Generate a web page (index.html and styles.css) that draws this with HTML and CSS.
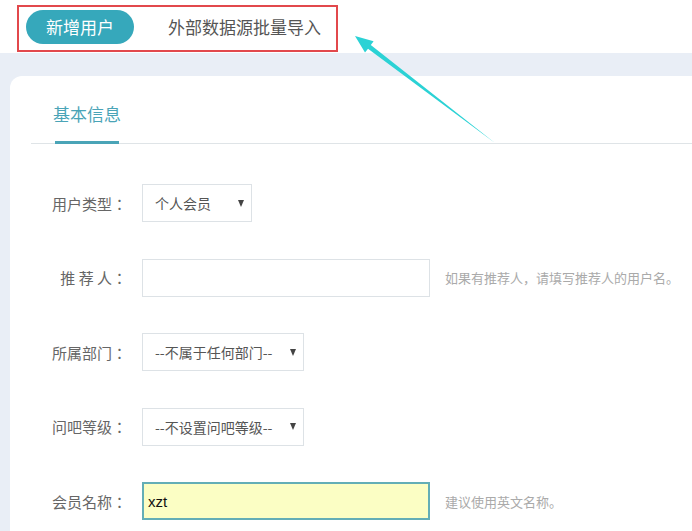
FILE: index.html
```html
<!DOCTYPE html>
<html lang="zh-CN">
<head>
<meta charset="utf-8">
<title>新增用户</title>
<link rel="stylesheet" href="styles.css">
</head>
<body>
<div class="page">
  <header class="header">
    <div class="tabs-box">
      <span class="pill">新增用户</span>
      <span class="plain-tab">外部数据源批量导入</span>
    </div>
  </header>
  <main class="main">
    <section class="card">
      <div class="tabbar">
        <span class="tab active">基本信息</span>
      </div>
      <div class="form">
        <div class="row">
          <span class="label" lang="zh-TW">用户类型：</span>
          <div class="select w-sm"><span class="val">个人会员</span><span class="caret"></span></div>
        </div>
        <div class="row">
          <span class="label" lang="zh-TW">推 荐 人：</span>
          <div class="input"></div>
          <span class="hint">如果有推荐人，请填写推荐人的用户名。</span>
        </div>
        <div class="row">
          <span class="label" lang="zh-TW">所属部门：</span>
          <div class="select w-md"><span class="val">--不属于任何部门--</span><span class="caret"></span></div>
        </div>
        <div class="row">
          <span class="label" lang="zh-TW">问吧等级：</span>
          <div class="select w-md"><span class="val">--不设置问吧等级--</span><span class="caret"></span></div>
        </div>
        <div class="row">
          <span class="label" lang="zh-TW">会员名称：</span>
          <div class="input filled">xzt</div>
          <span class="hint">建议使用英文名称。</span>
        </div>
      </div>
    </section>
  </main>
  <svg class="arrow" width="692" height="531" viewBox="0 0 692 531" aria-hidden="true">
    <polygon points="355,36 373.6,41.2 370.8,45 495,143 368,48.8 365,52.5" fill="#2bd2d5"/>
  </svg>
</div>
</body>
</html>
```

FILE: styles.css
```css
* { box-sizing: border-box; }
html, body { margin: 0; padding: 0; }
body {
  width: 692px;
  height: 531px;
  overflow: hidden;
  background: #e9eef6;
  font-family: "Noto Sans CJK SC", "Noto Sans", sans-serif;
  color: #555;
}
.page { position: relative; width: 692px; height: 531px; overflow: hidden; }
.header {
  height: 53px;
  background: #fff;
  padding: 5px 0 0 17px;
}
.tabs-box {
  width: 321px;
  height: 47px;
  border: 2px solid #e2484c;
  display: flex;
  align-items: center;
  padding: 0 0 3px 7px;
}
.pill {
  width: 108px;
  height: 34px;
  border-radius: 17px;
  background: #36a8bb;
  color: #fff;
  font-size: 17px;
  line-height: 34px;
  text-align: center;
}
.plain-tab {
  margin-left: 34px;
  font-size: 17px;
  color: #555;
  line-height: 34px;
}
.main { padding: 23px 0 0 10px; }
.card {
  width: 720px;
  height: 520px;
  background: #fff;
  border-radius: 12px;
  padding-left: 21px;
}
.tabbar {
  height: 68px;
  border-bottom: 1px solid #dfe4e7;
  display: flex;
  align-items: flex-end;
}
.tab {
  position: relative;
  margin-left: 22px;
  padding-bottom: 18px;
  font-size: 17px;
  line-height: 22px;
  color: #4aa4b7;
}
.tab.active::after {
  content: "";
  position: absolute;
  left: 2px;
  bottom: -1px;
  width: 64px;
  height: 3px;
  background: #4aa4b7;
}
.form {
  padding-top: 40px;
  display: flex;
  flex-direction: column;
  gap: 36.5px;
  margin-left: -21px;
}
.row {
  display: flex;
  align-items: center;
  height: 38px;
}
.label {
  width: 117px;
  text-align: right;
  font-family: "Noto Sans CJK TC", "Noto Sans CJK SC", sans-serif;
  font-size: 15px;
  color: #666;
  margin-right: 15px;
  white-space: pre;
}
.select, .input {
  height: 38px;
  border: 1px solid #dde2e6;
  background: #fff;
  display: flex;
  align-items: center;
  font-size: 14px;
  color: #555;
}
.select { padding: 0 7px 0 12px; justify-content: space-between; }
.w-sm { width: 110px; }
.w-md { width: 162px; }
.caret {
  width: 0;
  height: 0;
  border-left: 3.5px solid transparent;
  border-right: 3.5px solid transparent;
  border-top: 7px solid #444;
}
.input { width: 288px; }
.input.filled {
  background: #fbfec4;
  border: 2px solid #63aeb6;
  color: #111;
  font-family: "Liberation Sans", Arial, sans-serif;
  font-size: 15px;
  padding-left: 4px;
}
.hint {
  margin-left: 15px;
  font-size: 13px;
  color: #aaa;
}
.arrow { position: absolute; left: 0; top: 0; pointer-events: none; }
```
